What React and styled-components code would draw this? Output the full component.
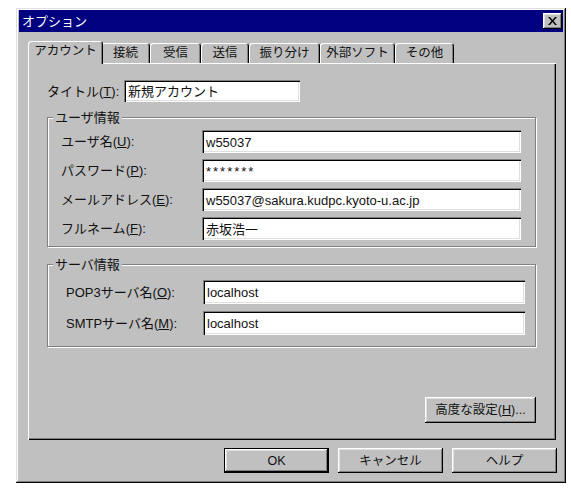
import React from 'react';
import styled, { createGlobalStyle } from 'styled-components';

const Global = createGlobalStyle`
  html, body { margin: 0; padding: 0; background: #fff; }
  body { font-family: "Liberation Sans", "Noto Sans CJK JP", sans-serif; color: #111; }
  * { box-sizing: border-box; }
`;

const raised = `
  box-shadow: inset -1px -1px 0 #000, inset 1px 1px 0 #fff, inset -2px -2px 0 #808080, inset 2px 2px 0 #dfdfdf;
`;

const Window = styled.div`
  margin: 8px 0 0 16px;
  width: 550px;
  height: 475px;
  background: #c0c0c0;
  padding: 3px;
  display: flex;
  flex-direction: column;
  box-shadow: inset -1px -1px 0 #000, inset 1px 1px 0 #dfdfdf, inset -2px -2px 0 #808080, inset 2px 2px 0 #fff;
`;

const TitleBar = styled.div`
  height: 22px;
  margin-top: -1px;
  background: #000080;
  color: #fff;
  display: flex;
  align-items: center;
  justify-content: space-between;
  padding: 0 1px 0 3px;
  font-size: 13px;
  line-height: 15px;
`;

const CloseButton = styled.div`
  width: 19px;
  height: 16px;
  background: #c0c0c0;
  display: flex;
  align-items: center;
  justify-content: center;
  ${raised}
`;

const Body = styled.div`
  flex: 1;
  display: flex;
  flex-direction: column;
  padding: 9px 7px 7px 9px;
`;

const TabRow = styled.div`
  display: flex;
  align-items: flex-end;
  height: 22px;
  padding-left: 2px;
`;

const Tab = styled.div`
  position: relative;
  z-index: ${p => (p.$active ? 2 : 1)};
  width: ${p => p.$w}px;
  height: ${p => (p.$active ? 23 : 20)}px;
  margin: ${p => (p.$active ? '0 -2px -1px -2px' : '0')};
  background: #c0c0c0;
  border-radius: 3px 3px 0 0;
  box-shadow: inset 1px 1px 0 #fff, inset -1px 0 0 #000, inset -2px 0 0 #808080;
  display: flex;
  align-items: center;
  justify-content: center;
  padding-bottom: ${p => (p.$active ? 3 : 0)}px;
  font-size: 12.5px;
  line-height: 14px;
  white-space: nowrap;
`;

const Panel = styled.div`
  flex: 1;
  background: #c0c0c0;
  display: flex;
  flex-direction: column;
  padding: 17px 20px 17px 19px;
  box-shadow: inset 1px 1px 0 #fff, inset -1px -1px 0 #000, inset -2px -2px 0 #808080;
`;

const TitleRow = styled.div`
  display: flex;
  align-items: center;
`;

const Label = styled.label`
  display: block;
  width: ${p => p.$w}px;
  font-size: 13px;
  line-height: 15px;
  white-space: nowrap;
`;

const TextField = styled.div`
  width: ${p => p.$w}px;
  height: ${p => p.$h}px;
  background: #fff;
  display: flex;
  align-items: center;
  padding: 1px 4px 0;
  font-size: 13px;
  letter-spacing: ${p => (p.$secret ? '2px' : '0')};
  line-height: 15px;
  white-space: nowrap;
  overflow: hidden;
  box-shadow: inset 1px 1px 0 #808080, inset 2px 2px 0 #000, inset -1px -1px 0 #fff, inset -2px -2px 0 #dfdfdf;
`;

const Group = styled.fieldset`
  margin: ${p => p.$mt}px 0 0;
  padding: 0;
  min-width: 0;
  border: 1px solid #808080;
  box-shadow: 1px 1px 0 #fff, inset 1px 1px 0 #fff;
`;

const Legend = styled.legend`
  margin-left: 5px;
  padding: 0 2px;
  background: #c0c0c0;
  font-size: 13px;
  line-height: 15px;
`;

const Rows = styled.div`
  display: flex;
  flex-direction: column;
  gap: ${p => p.$gap}px;
  padding: ${p => p.$pt}px 0 ${p => p.$pb}px ${p => p.$pl}px;
`;

const Row = styled.div`
  display: flex;
  align-items: center;
`;

const Footer = styled.div`
  margin-top: auto;
  display: flex;
  justify-content: flex-end;
`;

const Button = styled.button`
  width: ${p => p.$w}px;
  height: ${p => p.$h}px;
  margin: 0;
  padding: 0;
  border: ${p => (p.$default ? '1px solid #000' : 'none')};
  background: #c0c0c0;
  font-family: inherit;
  font-size: 12.5px;
  line-height: 14px;
  color: #111;
  ${raised}
`;

const ButtonRow = styled.div`
  display: flex;
  justify-content: flex-end;
  gap: 9px;
  margin: 8px -1px 0 0;
`;

const M = ({ k }) => (
  <>
    (<u>{k}</u>):
  </>
);

const tabs = [
  { t: 'アカウント', w: 75, active: true },
  { t: '接続', w: 49 },
  { t: '受信', w: 51 },
  { t: '送信', w: 48 },
  { t: '振り分け', w: 71 },
  { t: '外部ソフト', w: 75 },
  { t: 'その他', w: 59 },
];

const userRows = [
  { label: 'ユーザ名', k: 'U', value: 'w55037' },
  { label: 'パスワード', k: 'P', value: '*******', secret: true },
  { label: 'メールアドレス', k: 'E', value: 'w55037@sakura.kudpc.kyoto-u.ac.jp' },
  { label: 'フルネーム', k: 'F', value: '赤坂浩一' },
];

const serverRows = [
  { label: 'POP3サーバ名', k: 'O', value: 'localhost' },
  { label: 'SMTPサーバ名', k: 'M', value: 'localhost' },
];

export default function App() {
  return (
    <>
      <Global />
      <Window>
        <TitleBar>
          <span>オプション</span>
          <CloseButton>
            <svg width="9" height="8" viewBox="0 0 9 8">
              <path d="M0 0h2l2.5 3 2.5-3h2L5.5 4 9 8H7L4.5 5 2 8H0l3.5-4z" fill="#000" />
            </svg>
          </CloseButton>
        </TitleBar>
        <Body>
          <TabRow>
            {tabs.map(tb => (
              <Tab key={tb.t} $w={tb.w} $active={tb.active}>
                {tb.t}
              </Tab>
            ))}
          </TabRow>
          <Panel>
            <TitleRow>
              <Label $w={77}>
                タイトル<M k="T" />
              </Label>
              <TextField $w={176} $h={22}>
                新規アカウント
              </TextField>
            </TitleRow>

            <Group $mt={8}>
              <Legend>ユーザ情報</Legend>
              <Rows $gap={6} $pt={5} $pb={6} $pl={13}>
                {userRows.map(r => (
                  <Row key={r.k}>
                    <Label $w={141}>
                      {r.label}
                      <M k={r.k} />
                    </Label>
                    <TextField $w={319} $h={23} $secret={r.secret}>
                      {r.value}
                    </TextField>
                  </Row>
                ))}
              </Rows>
            </Group>

            <Group $mt={10}>
              <Legend>サーバ情報</Legend>
              <Rows $gap={7} $pt={8} $pb={11} $pl={18}>
                {serverRows.map(r => (
                  <Row key={r.k}>
                    <Label $w={137}>
                      {r.label}
                      <M k={r.k} />
                    </Label>
                    <TextField $w={322} $h={24}>
                      {r.value}
                    </TextField>
                  </Row>
                ))}
              </Rows>
            </Group>

            <Footer>
              <Button $w={111} $h={26}>
                高度な設定(<u>H</u>)...
              </Button>
            </Footer>
          </Panel>
          <ButtonRow>
            <Button $w={105} $h={25} $default>
              OK
            </Button>
            <Button $w={105} $h={25}>
              キャンセル
            </Button>
            <Button $w={105} $h={25}>
              ヘルプ
            </Button>
          </ButtonRow>
        </Body>
      </Window>
    </>
  );
}
